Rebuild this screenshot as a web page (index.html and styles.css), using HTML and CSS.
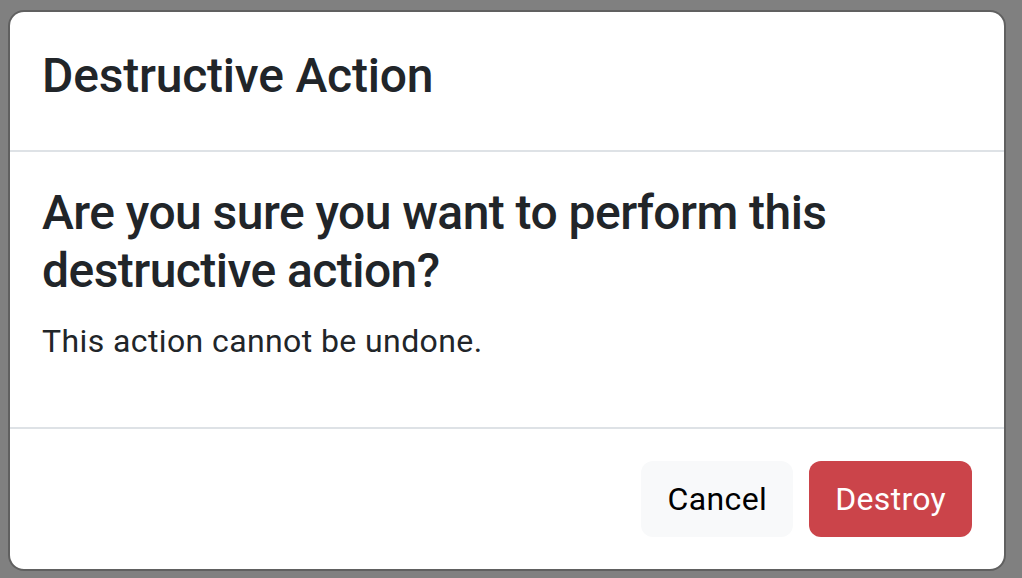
FILE: index.html
```html
<!DOCTYPE html>
<html lang="en">
<head>
<meta charset="utf-8">
<title>Destructive Action</title>
<link rel="stylesheet" href="styles.css">
</head>
<body>
<div class="modal">
  <div class="modal-header">
    <h4 class="modal-title">Destructive Action</h4>
  </div>
  <div class="modal-body">
    <h4 class="question">Are you sure you want to perform this destructive action?</h4>
    <p class="note">This action cannot be undone.</p>
  </div>
  <div class="modal-footer">
    <button class="btn btn-light">Cancel</button>
    <button class="btn btn-danger">Destroy</button>
  </div>
</div>
</body>
</html>
```

FILE: styles.css
```css
html, body {
  margin: 0;
  padding: 0;
  background: #808080;
  height: 100%;
}
body {
  font-family: Roboto, "Liberation Sans", sans-serif;
  color: #212529;
  padding: 10px 16px 0 8px;
  box-sizing: border-box;
}
.modal {
  width: 998px;
  box-sizing: border-box;
  background: #fff;
  border: 2px solid rgba(0, 0, 0, 0.25);
  border-radius: 16px;
  background-clip: padding-box;
  display: flex;
  flex-direction: column;
}
.modal-header {
  padding: 28px 32px 38px;
  border-bottom: 2px solid #dee2e6;
}
.modal-title {
  margin: 0;
  font-size: 48px;
  font-weight: 500;
  line-height: 72px;
  letter-spacing: -0.2px;
}
.modal-body {
  padding: 32px;
}
.question {
  margin: 0 0 18px;
  font-size: 48px;
  font-weight: 500;
  line-height: 1.2;
  letter-spacing: -0.55px;
}
.note {
  margin: 0 0 30px;
  font-size: 32px;
  line-height: 1.5;
  letter-spacing: 0.4px;
}
.modal-footer {
  border-top: 2px solid #dee2e6;
  padding: 24px;
  display: flex;
  justify-content: flex-end;
}
.btn {
  font-family: inherit;
  font-size: 32px;
  line-height: 48px;
  padding: 12px 24px;
  border: 2px solid transparent;
  border-radius: 12px;
  margin: 8px;
}
.btn-light {
  background: #f8f9fa;
  color: #000;
  letter-spacing: 0.4px;
}
.btn-danger {
  background: #cb444a;
  color: #fff;
  letter-spacing: 0.3px;
}
```
